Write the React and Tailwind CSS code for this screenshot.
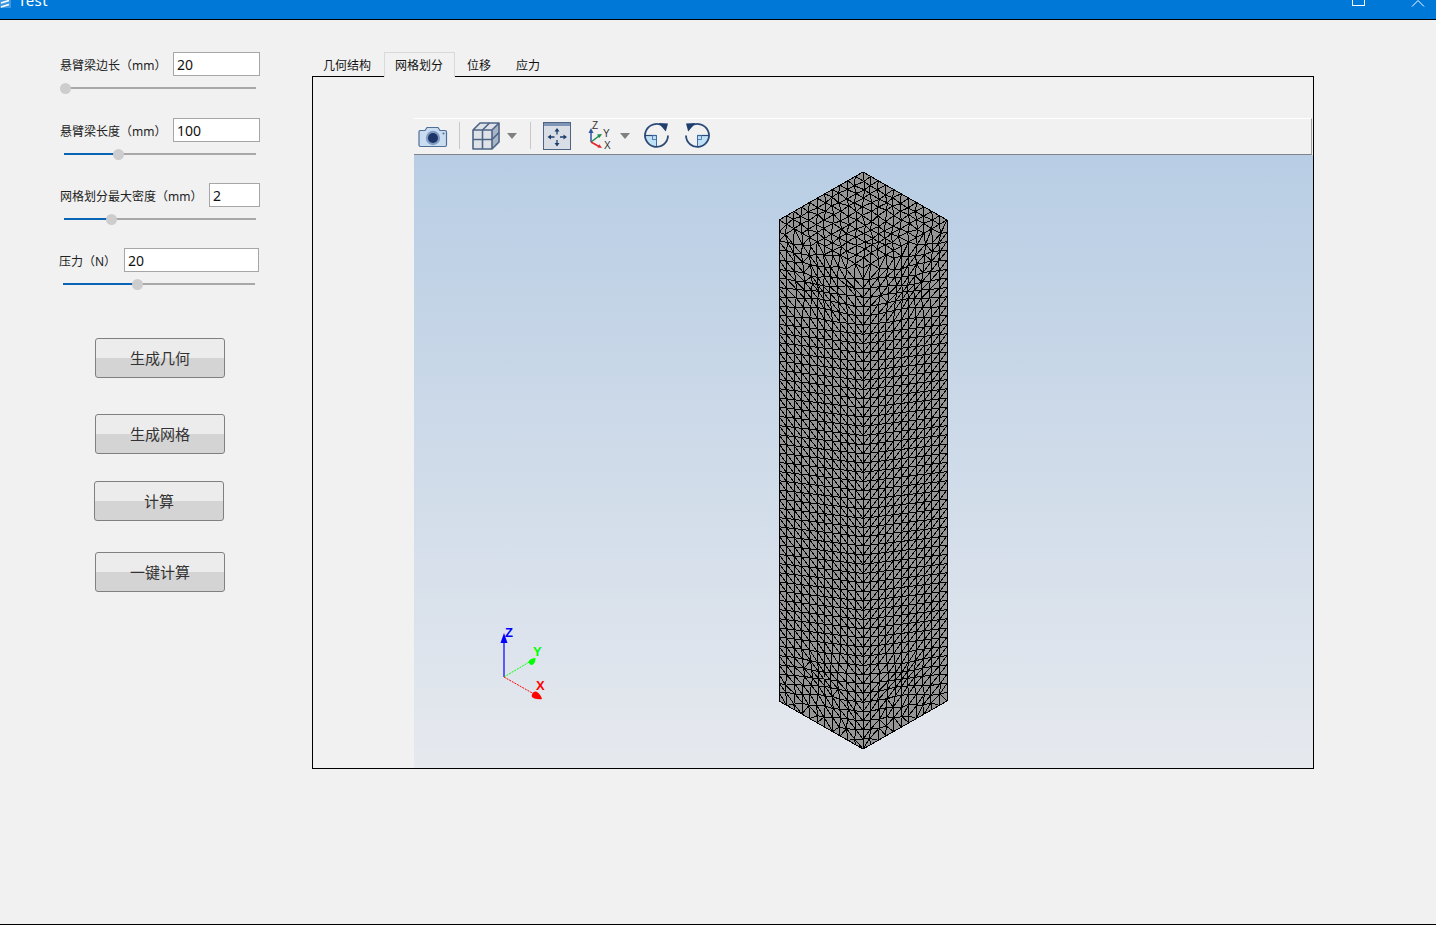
import React from 'react';

// small seeded random so the mesh comes out the same every render
const makeRandom = (seed) => {
  let s = seed;
  return () => {
    s = (s * 16807) % 2147483647;
    return (s - 1) / 2147483646;
  };
};

// Bowyer-Watson, returns triangles as index triples
const triangulate = (pts) => {
  const all = [...pts, [-1e5, -1e5], [1e5, -1e5], [0, 1e5]];
  const n = pts.length;
  const circle = (t) => {
    const [ax, ay] = all[t[0]];
    const [bx, by] = all[t[1]];
    const [cx, cy] = all[t[2]];
    const d = 2 * (ax * (by - cy) + bx * (cy - ay) + cx * (ay - by));
    if (Math.abs(d) < 1e-9) return { x: 0, y: 0, r: Infinity };
    const a2 = ax * ax + ay * ay;
    const b2 = bx * bx + by * by;
    const c2 = cx * cx + cy * cy;
    const x = (a2 * (by - cy) + b2 * (cy - ay) + c2 * (ay - by)) / d;
    const y = (a2 * (cx - bx) + b2 * (ax - cx) + c2 * (bx - ax)) / d;
    return { x, y, r: (ax - x) ** 2 + (ay - y) ** 2 };
  };
  let tris = [[n, n + 1, n + 2]].map((t) => ({ t, c: circle(t) }));
  for (let i = 0; i < n; i++) {
    const [px, py] = all[i];
    const keep = [];
    const edges = new Map();
    for (const tri of tris) {
      if ((px - tri.c.x) ** 2 + (py - tri.c.y) ** 2 < tri.c.r) {
        const [a, b, c] = tri.t;
        for (const [u, v] of [[a, b], [b, c], [c, a]]) {
          const key = u < v ? `${u}_${v}` : `${v}_${u}`;
          edges.set(key, edges.has(key) ? null : [u, v]);
        }
      } else {
        keep.push(tri);
      }
    }
    for (const e of edges.values()) {
      if (e) {
        const t = [e[0], e[1], i];
        keep.push({ t, c: circle(t) });
      }
    }
    tris = keep;
  }
  return tris.map((x) => x.t).filter((t) => t.every((v) => v < n));
};

const edgesPath = (pts, shear) => {
  const moved = pts.map(([x, y]) => [x, y - shear * x]);
  const seen = new Set();
  let d = '';
  for (const [a, b, c] of triangulate(moved)) {
    for (const [u, v] of [[a, b], [b, c], [c, a]]) {
      const key = u < v ? `${u}_${v}` : `${v}_${u}`;
      if (!seen.has(key)) {
        seen.add(key);
        d += `M${pts[u][0].toFixed(1)} ${pts[u][1].toFixed(1)}L${pts[v][0].toFixed(1)} ${pts[v][1].toFixed(1)}`;
      }
    }
  }
  return d;
};

const pull = (p, node, radius, amount) => {
  const dx = node[0] - p[0];
  const dy = node[1] - p[1];
  const dist = Math.hypot(dx, dy);
  if (dist >= radius) return p;
  const k = amount * (1 - dist / radius);
  return [p[0] + dx * k, p[1] + dy * k];
};

const COLS = 11;

// one side face in the coordinates of the left side, mirrored for the right one
const sideFace = (seed, mirror) => {
  const rand = makeRandom(seed);
  const pts = [];
  const top = (u) => 220 + 48 * u;
  for (let i = 0; i <= COLS; i++) {
    const u = i / COLS;
    pts.push([779 + 84 * u, top(u)]);
    pts.push([779 + 84 * u, top(u) + 481]);
  }
  for (let i = 0; i <= COLS; i++) {
    const u = i / COLS;
    const x = 779 + 84 * u;
    for (let j = -8; j < 62; j++) {
      const y = 214 + 9.2 * j + 0.9 * i;
      const fromTop = y - top(u);
      const fromBottom = top(u) + 481 - y;
      if (fromTop < 5.5 || fromBottom < 5.5) continue;
      let p = [x, y];
      const inner = i > 0 && i < COLS;
      const zone = Math.max(1 - fromTop / 70, 1 - fromBottom / 55, 0);
      if (zone > 0 && inner) {
        p = [x + (rand() - 0.5) * 3.5 * zone, y + (rand() - 0.5) * 3.5 * zone];
      }
      if (inner) {
        p = pull(p, [820, 290], 34, 0.35);
        p = pull(p, [822, 678], 30, 0.35);
      }
      pts.push(p);
    }
  }
  const out = mirror ? pts.map(([x, y]) => [1726 - x, y]) : pts;
  return edgesPath(out, mirror ? -0.35 : 0.35);
};

const topFace = () => {
  const rand = makeRandom(77);
  const L = [779, 220];
  const ax = [84, -48];
  const bx = [84, 48];
  const pts = [];
  const n = COLS;
  for (let i = 0; i <= n; i++) {
    for (let j = 0; j <= n; j++) {
      const edge = i === 0 || j === 0 || i === n || j === n;
      let p = [L[0] + (ax[0] * i + bx[0] * j) / n, L[1] + (ax[1] * i + bx[1] * j) / n];
      if (!edge) {
        p = [p[0] + (rand() - 0.5) * 3, p[1] + (rand() - 0.5) * 2.5];
        p = pull(p, [880, 240], 30, 0.25);
      }
      pts.push(p);
    }
  }
  return edgesPath(pts, 0);
};

const meshLines = sideFace(4211, false) + sideFace(9203, true) + topFace();

const Viewport = () => (
  <div className="flex-1 bg-linear-to-b from-[#b8cde4] to-[#e6e9ee]">
    <svg className="block w-full h-full" viewBox="414 155 899 613">
      <polygon points="863,172 947,220 947,701 863,749 779,701 779,220" fill="#969696" />
      <path d={meshLines} fill="none" stroke="#000" strokeWidth="1" shapeRendering="crispEdges" />
      <polygon points="863,172 947,220 947,701 863,749 779,701 779,220" fill="none" stroke="#000" strokeWidth="1" shapeRendering="crispEdges" />

      <line x1="504" y1="677" x2="504" y2="640" stroke="#0000ff" strokeWidth="1.2" />
      <path d="M504 633l3.5 10h-7z" fill="#0000ff" />
      <line x1="504" y1="677" x2="531" y2="661" stroke="#00ff00" strokeWidth="1" strokeDasharray="2 1" />
      <path d="M535.5 658c.3 3-1 6-3.5 7-2 0-3.5-2-3.5-3.5 1-2 4-3.500 7-3.500z" fill="#00ff00" />
      <line x1="504" y1="677" x2="534" y2="694" stroke="#ff0000" strokeWidth="1" strokeDasharray="2 1" />
      <path d="M542 699c-3.500 .5-8 0-10-2-1-2 1-5.500 3.500-5.500 3 .5 5.500 4 6.500 7.500z" fill="#ff0000" />
      <text x="505" y="637" fill="#0000ff" fontSize="13" fontWeight="700" fontFamily="Liberation Sans">Z</text>
      <text x="533" y="656" fill="#00ff00" fontSize="13" fontWeight="700" fontFamily="Liberation Sans">Y</text>
      <text x="536" y="690" fill="#ff0000" fontSize="13" fontWeight="700" fontFamily="Liberation Sans">X</text>
    </svg>
  </div>
);

const CameraIcon = () => (
  <svg width="30" height="26" viewBox="0 0 30 26" className="ml-[4px]">
    <path d="M2 7.500h5l2-3h11l2 3h5a1.500 1.500 0 0 1 1.500 1.500v13a1.500 1.500 0 0 1-1.500 1.500H2.500A1.500 1.500 0 0 1 1 22V9a1.500 1.500 0 0 1 1-1.500z" fill="#c9dcf0" stroke="#4f6f99" strokeWidth="1.2" />
    <circle cx="15" cy="15" r="7.200" fill="#7f9cc4" />
    <circle cx="15" cy="15" r="5" fill="#1c3668" />
    <circle cx="25.500" cy="10.500" r="1" fill="#4f6f99" />
  </svg>
);

const BoxIcon = () => (
  <svg width="30" height="30" viewBox="0 0 30 30">
    <path d="M2 9l7-7h19v19l-7 7H2z" fill="#dfe3e8" />
    <path d="M21 9l7-7v19l-7 7z" fill="#a9b5c6" />
    <path d="M2 9h19v19H2zM2 9l7-7h19v19l-7 7M21 9l7-7" fill="none" stroke="#4d6485" strokeWidth="1.6" strokeLinejoin="round" />
    <path d="M2 18.500h19l7-7M11.500 9v19M11.500 9l7-7" fill="none" stroke="#4d6485" strokeWidth="1.6" />
  </svg>
);

const FitIcon = () => (
  <svg width="28" height="28" viewBox="0 0 28 28">
    <rect x="0.500" y="0.500" width="27" height="27" fill="#d9dde5" stroke="#4d6485" />
    <rect x="1" y="1" width="26" height="3" fill="#7f95b5" />
    <path d="M14 7.500v5M14 18v5M6 15h5.500M17 15h5.500" stroke="#1d3f6e" strokeWidth="1.300" />
    <path d="M14 6l-2.500 3.500h5zM14 24.500l-2.500-3.500h5zM4.500 15l3.500-2.500v5zM24 15l-3.500-2.500v5z" fill="#1d3f6e" />
  </svg>
);

const AxesIcon = () => (
  <svg width="26" height="30" viewBox="0 0 26 30">
    <path d="M3 21V10" stroke="#2f55a4" strokeWidth="1.500" />
    <path d="M3 7l-2.500 5h5z" fill="#2f55a4" />
    <path d="M3 21l8-6" stroke="#1a8c4a" strokeWidth="1.500" />
    <path d="M14 13l-5 .5 2.400 3.400z" fill="#1a8c4a" />
    <path d="M3 21l8 4.500" stroke="#e3242b" strokeWidth="1.500" />
    <path d="M14 27l-4.500-.5 1.800-3.200z" fill="#e3242b" />
    <text x="4" y="8" fontSize="10" fill="#333" fontFamily="Liberation Sans">Z</text>
    <text x="15" y="16" fontSize="10" fill="#333" fontFamily="Liberation Sans">Y</text>
    <text x="16" y="28" fontSize="10" fill="#333" fontFamily="Liberation Sans">X</text>
  </svg>
);

const RotateIcon = ({ flip }) => (
  <svg width="27" height="27" viewBox="0 0 27 27" className={flip ? '-scale-x-100' : ''}>
    <path d="M13.500 13.500H2a11.500 11.500 0 0 0 11.500 11.500z" fill="#bfe0f5" />
    <path d="M13.500 13.500V25" stroke="#3a6ea5" strokeWidth="1" />
    <path d="M2 13.500h11.500" stroke="#2b4a78" strokeWidth="1.200" />
    <rect x="9.500" y="13.500" width="4" height="4" fill="none" stroke="#3a6ea5" strokeWidth="0.800" />
    <path d="M20.500 4.300A11.500 11.500 0 1 0 25 13.500" fill="none" stroke="#2b4a78" strokeWidth="1.800" />
    <path d="M15.500 1l9.500.5-2.200 8z" fill="#1f3f70" />
  </svg>
);

const Caret = () => (
  <div className="w-0 h-0 border-l-[5px] border-r-[5px] border-t-[6px] border-l-transparent border-r-transparent border-t-[#808080]" />
);

const Separator = () => <div className="w-[1px] h-[27px] bg-[#c8c8c8]" />;

const Toolbar = () => (
  <div className="h-[37px] w-[898px] shrink-0 flex items-center pb-[2px] border-t border-t-white border-b border-b-[#7f8488] border-r border-r-[#a0a0a0] bg-[#f1f1f1]">
    <CameraIcon />
    <div className="ml-[11px]"><Separator /></div>
    <div className="ml-[11px]"><BoxIcon /></div>
    <div className="ml-[6px]"><Caret /></div>
    <div className="ml-[13px]"><Separator /></div>
    <div className="ml-[12px]"><FitIcon /></div>
    <div className="ml-[17px]"><AxesIcon /></div>
    <div className="ml-[6px]"><Caret /></div>
    <div className="ml-[13px]"><RotateIcon /></div>
    <div className="ml-[14px]"><RotateIcon flip /></div>
  </div>
);

const Slider = ({ percent }) => (
  <div className="relative h-[12px] w-[192px]">
    <div className="absolute left-0 right-0 top-[5px] h-[2px] bg-[#a8a8a8]" />
    <div className="absolute left-0 top-[5px] h-[2px] bg-[#0a64b4]" style={{ width: `${percent}%` }} />
    <div
      className="absolute top-[1px] h-[11px] w-[11px] -ml-[5px] rounded-full bg-[#cdcdcd]"
      style={{ left: `${percent}%` }}
    />
  </div>
);

const Param = ({ label, value, percent, inputClass, rowClass }) => (
  <div className={rowClass}>
    <div className="flex items-center justify-between w-[200px]">
      <span className="pt-[3px] text-[12px] text-[#222] whitespace-nowrap">{label}</span>
      <input
        readOnly
        value={value}
        className={`h-[24px] border border-[#a6a6a6] bg-white pl-[3px] text-[14px] text-[#111] outline-none ${inputClass}`}
      />
    </div>
    <div className="mt-[6px] ml-[4px]">
      <Slider percent={percent} />
    </div>
  </div>
);

const ActionButton = ({ children, className }) => (
  <button
    className={`block w-[130px] h-[40px] rounded-[3px] border border-[#808080] bg-linear-to-b from-[#ececec] from-50% to-[#d4d4d4] to-50% text-[15px] text-[#333] ${className}`}
  >
    {children}
  </button>
);

const tabs = ['几何结构', '网格划分', '位移', '应力'];

const App = () => {
  return (
    <div className="w-[1436px] h-[925px] flex flex-col bg-[#f1f1f1] border-b border-b-black overflow-hidden font-['Noto_Sans','Noto_Sans_CJK_SC',sans-serif]">
      <header className="h-[20px] shrink-0 flex bg-[#0078d7] border-b border-b-black overflow-hidden text-white">
        <svg width="11" height="8" viewBox="0 0 11 8" className="shrink-0">
          <rect width="11" height="8" fill="#3f97e0" />
          <path d="M1 3l8-2.500M1 7l8-2.500" stroke="#fff" strokeWidth="1.600" />
        </svg>
        <span className="ml-[7px] -mt-[10px] text-[15px] leading-[20px] tracking-[0.4px] font-['Noto_Sans']">Test</span>
        <div className="ml-auto mr-[46px] -mt-[7px] w-[13px] h-[13px] border border-white" />
        <svg width="14" height="7" viewBox="0 0 14 7" className="mr-[11px]">
          <path d="M1 6.500L7 .5l6 6" fill="none" stroke="#fff" strokeWidth="1" />
        </svg>
      </header>

      <div className="flex flex-1">
        <aside className="w-[312px] shrink-0 pt-[32px]">
          <Param rowClass="ml-[60px]" label="悬臂梁边长（mm）" value="20" percent={0.5} inputClass="w-[87px]" />
          <Param rowClass="ml-[60px] mt-[24px]" label="悬臂梁长度（mm）" value="100" percent={28} inputClass="w-[87px]" />
          <Param rowClass="ml-[60px] mt-[23px]" label="网格划分最大密度（mm）" value="2" percent={24.5} inputClass="w-[51px]" />
          <Param rowClass="ml-[59px] mt-[23px]" label="压力（N）" value="20" percent={38.5} inputClass="w-[135px]" />
          <ActionButton className="ml-[95px] mt-[48px]">生成几何</ActionButton>
          <ActionButton className="ml-[95px] mt-[36px]">生成网格</ActionButton>
          <ActionButton className="ml-[94px] mt-[27px]">计算</ActionButton>
          <ActionButton className="ml-[95px] mt-[31px]">一键计算</ActionButton>
        </aside>

        <main className="pt-[32px]">
          <div className="flex h-[24px] pl-[1px] text-[12px] text-[#111]">
            <div className="w-[71px] pl-[10px] leading-[28px]">{tabs[0]}</div>
            <div className="relative z-10 h-[25px] w-[71px] pl-[10px] leading-[25px] border border-[#d9d9d9] border-b-0 bg-[#f1f1f1]">{tabs[1]}</div>
            <div className="w-[49px] pl-[12px] leading-[28px]">{tabs[2]}</div>
            <div className="w-[48px] pl-[12px] leading-[28px]">{tabs[3]}</div>
          </div>
          <div className="w-[1002px] h-[693px] border border-black flex flex-col pl-[101px] pt-[41px]">
            <Toolbar />
            <Viewport />
          </div>
        </main>
      </div>
    </div>
  );
};

export default App;
